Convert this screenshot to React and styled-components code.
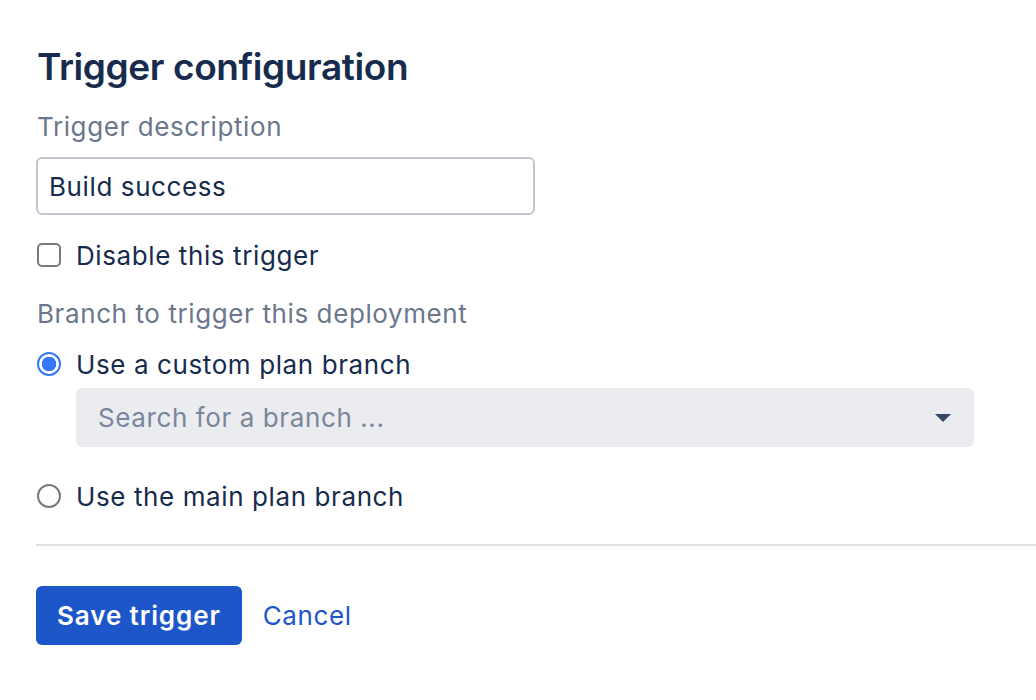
import React from "react"
import styled, { createGlobalStyle } from "styled-components"

const GlobalStyle = createGlobalStyle`
    body{
        margin: 0;
        background: #ffffff;
        font-family: Inter, "Noto Sans", "Liberation Sans", sans-serif;
        color: #172B4D;
    }
`

const Page = styled.div`
    padding: 45px 0 40px 36px;
    letter-spacing: 0.6px;
`

const Title = styled.h1`
    margin: 0 0 22px 1px;
    font-size: 37px;
    line-height: 44px;
    font-weight: 600;
    letter-spacing: -0.4px;
    color: #172B4D;
`

const FieldLabel = styled.div`
    font-size: 26px;
    line-height: 32px;
    color: #6B778C;
    margin: ${p => p.$margin || "0"};
    padding-left: 1px;
`

const TextInput = styled.div`
    box-sizing: border-box;
    width: 499px;
    height: 58px;
    border: 2px solid #C1C7D0;
    border-radius: 6px;
    padding: 0 11px;
    display: flex;
    align-items: center;
    font-size: 26px;
    color: #172B4D;
`

const OptionRow = styled.label`
    display: flex;
    align-items: center;
    gap: 15px;
    height: 32px;
    margin: ${p => p.$margin || "0"};
    font-size: 26px;
    color: #172B4D;
    padding-left: 1px;
`

const CheckBox = styled.span`
    box-sizing: border-box;
    width: 24px;
    height: 24px;
    border: 2px solid #7A7A7A;
    border-radius: 5px;
    background: #fff;
    flex-shrink: 0;
`

const Radio = styled.span`
    box-sizing: border-box;
    width: 24px;
    height: 24px;
    border-radius: 50%;
    flex-shrink: 0;
    border: 2px solid ${p => p.$checked ? "#3478F6" : "#7A7A7A"};
    background: ${p => p.$checked ? "radial-gradient(circle, #3478F6 0 7px, #fff 7.5px)" : "#fff"};
`

const Select = styled.div`
    box-sizing: border-box;
    width: 898px;
    height: 59px;
    margin: 8px 0 0 40px;
    background: #EBECF0;
    border-radius: 6px;
    padding: 0 22px;
    display: flex;
    align-items: center;
    justify-content: space-between;
    font-size: 26px;
    color: #7A869A;
`

const Caret = styled.span`
    width: 0;
    height: 0;
    border-left: 8px solid transparent;
    border-right: 8px solid transparent;
    border-top: 8px solid #344563;
    margin-right: 1px;
`

const Divider = styled.hr`
    border: none;
    height: 2px;
    background: #E1E3E8;
    margin: 32px 0 40px 0;
`

const Actions = styled.div`
    display: flex;
    align-items: center;
    gap: 21px;
`

const PrimaryButton = styled.button`
    height: 59px;
    padding: 0 21px;
    border: none;
    border-radius: 6px;
    background: #1D56C9;
    color: #fff;
    font-family: inherit;
    font-size: 26px;
    font-weight: 600;
    letter-spacing: 0.9px;
`

const LinkButton = styled.a`
    font-size: 26px;
    color: #1D56C9;
    text-decoration: none;
`

const App = () =>
    <Page>
        <GlobalStyle />
        <Title>Trigger configuration</Title>
        <FieldLabel $margin="0 0 14px 0">Trigger description</FieldLabel>
        <TextInput>Build success</TextInput>
        <OptionRow $margin="24px 0 0 0">
            <CheckBox />
            Disable this trigger
        </OptionRow>
        <FieldLabel $margin="27px 0 0 0">Branch to trigger this deployment</FieldLabel>
        <OptionRow $margin="18px 0 0 0">
            <Radio $checked />
            Use a custom plan branch
        </OptionRow>
        <Select>
            <span>Search for a branch ...</span>
            <Caret />
        </Select>
        <OptionRow $margin="33px 0 0 0">
            <Radio />
            Use the main plan branch
        </OptionRow>
        <Divider />
        <Actions>
            <PrimaryButton>Save trigger</PrimaryButton>
            <LinkButton href="#">Cancel</LinkButton>
        </Actions>
    </Page>

export default App
